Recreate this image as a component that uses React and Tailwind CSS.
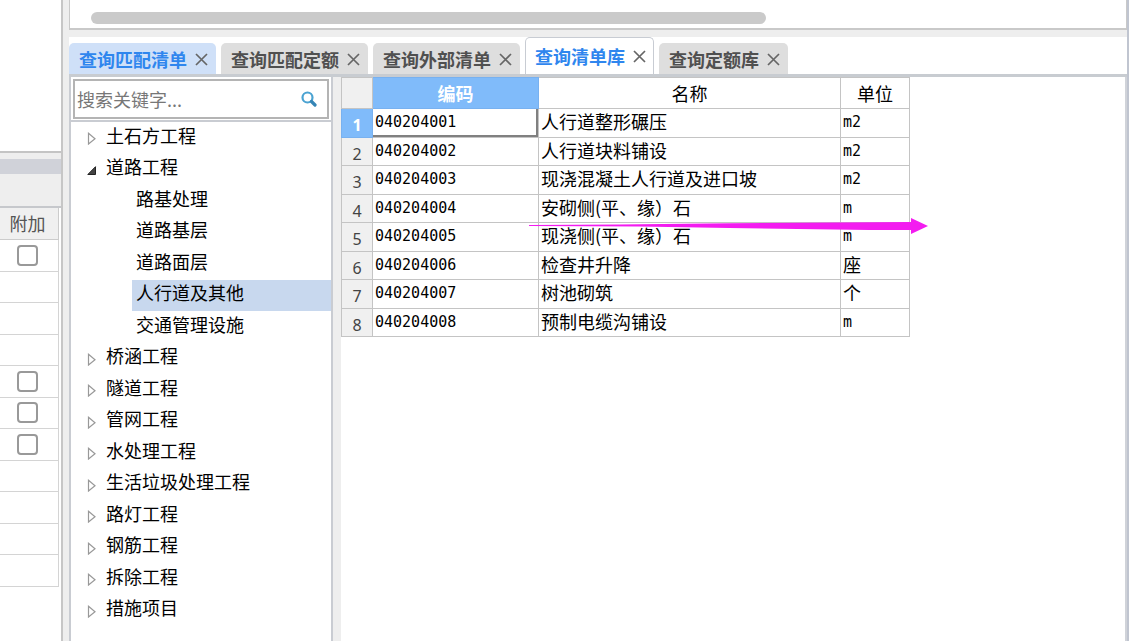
import React from "react";

const extraRows = [true, false, false, false, true, true, true, false, false, false, false];

const tabs = [
  { label: "查询匹配清单", kind: "hover" },
  { label: "查询匹配定额", kind: "idle" },
  { label: "查询外部清单", kind: "idle" },
  { label: "查询清单库", kind: "active" },
  { label: "查询定额库", kind: "idle" },
];

const tabStyles = {
  hover: "h-[31px] border-transparent bg-[#cfe0f8] text-[#2f86ee]",
  idle: "h-[31px] border-transparent bg-[#dedede] text-[#505050]",
  active: "h-[37px] border-[#c8ccd3] bg-white text-[#2f86ee]",
};

const tree = [
  { label: "土石方工程" },
  { label: "道路工程", open: true },
  { label: "路基处理", child: true },
  { label: "道路基层", child: true },
  { label: "道路面层", child: true },
  { label: "人行道及其他", child: true, selected: true },
  { label: "交通管理设施", child: true },
  { label: "桥涵工程" },
  { label: "隧道工程" },
  { label: "管网工程" },
  { label: "水处理工程" },
  { label: "生活垃圾处理工程" },
  { label: "路灯工程" },
  { label: "钢筋工程" },
  { label: "拆除工程" },
  { label: "措施项目" },
];

const items = [
  ["040204001", "人行道整形碾压", "m2"],
  ["040204002", "人行道块料铺设", "m2"],
  ["040204003", "现浇混凝土人行道及进口坡", "m2"],
  ["040204004", "安砌侧(平、缘）石", "m"],
  ["040204005", "现浇侧(平、缘）石", "m"],
  ["040204006", "检查井升降", "座"],
  ["040204007", "树池砌筑", "个"],
  ["040204008", "预制电缆沟铺设", "m"],
];

function CloseIcon() {
  return (
    <svg width="13" height="13" viewBox="0 0 13 13" fill="none" stroke="#666" strokeWidth="1.7" aria-hidden="true">
      <path d="M1 1L12 12M12 1L1 12" />
    </svg>
  );
}

function SearchIcon() {
  return (
    <svg width="16" height="16" viewBox="0 0 16 16" fill="none" aria-hidden="true">
      <circle cx="6.5" cy="6.5" r="5" stroke="#4ba3d2" strokeWidth="2.2" />
      <path d="M10.5 10.5L14 14" stroke="#3585b5" strokeWidth="3.2" strokeLinecap="round" />
    </svg>
  );
}

function Arrow({ open }) {
  return (
    <svg width="10" height="14" viewBox="0 0 10 14" className="shrink-0" aria-hidden="true">
      {open ? (
        <path d="M0.8 11.5L8.5 3.7V11.5Z" fill="#444" stroke="#222" strokeWidth="1" />
      ) : (
        <path d="M1.5 2.3L8 7.7L1.5 13Z" fill="white" stroke="#999" strokeWidth="1.2" />
      )}
    </svg>
  );
}

function SidePanel() {
  return (
    <aside className="flex w-[63px] shrink-0 flex-col border-r-2 border-[#c6c6c6] bg-white">
      <div className="h-[153px] shrink-0 border-b-2 border-[#c4c4c4]" />
      <div className="h-[6px] shrink-0 bg-[#eee]" />
      <div className="h-[15px] shrink-0 bg-[#d0d2d9]" />
      <div className="h-[34px] shrink-0 border-b-2 border-[#c6c8cc] bg-[#eee]" />
      <table className="mr-[2px] border-collapse">
        <thead>
          <tr className="h-[31px]">
            <th className="border-r border-b border-[#ccc] bg-[#f0f0f0] p-0 pr-[3px] text-[18px] leading-6 font-normal text-[#555]">附加</th>
          </tr>
        </thead>
        <tbody>
          {extraRows.map((box, i) => (
            <tr key={i} className="odd:h-8 even:h-[31px]">
              <td className="border-r border-b border-[#d4d4d4] p-0 pr-[3px]">
                {box && (
                  <input
                    type="checkbox"
                    aria-label={`附加 ${i + 1}`}
                    className="mx-auto block size-[21px] appearance-none rounded-[4px] border-2 border-[#999] bg-white"
                  />
                )}
              </td>
            </tr>
          ))}
        </tbody>
      </table>
    </aside>
  );
}

function Tabs() {
  return (
    <nav className="flex h-[40px] shrink-0 items-end gap-[5px] border-b-[3px] border-[#c8ccd1] bg-white">
      {tabs.map((t) => (
        <div
          key={t.label}
          className={`flex items-center gap-2 rounded-t-[5px] border border-b-0 pr-[7px] pl-[9px] text-[18px] leading-6 font-bold ${tabStyles[t.kind]}`}
        >
          <button type="button" className="pb-px">{t.label}</button>
          <button type="button" aria-label={`关闭 ${t.label}`}>
            <CloseIcon />
          </button>
        </div>
      ))}
    </nav>
  );
}

function TreePanel() {
  return (
    <section className="w-[264px] shrink-0 border-r-2 border-l-2 border-[#c9ccd2] bg-white">
      <div className="border-b-2 border-[#c9ccd2] p-[2px] pb-px">
        <label className="flex h-[40px] items-center border-2 border-[#b4b4b4] pr-[10px] pl-[2px]">
          <input
            type="text"
            aria-label="搜索关键字"
            placeholder="搜索关键字..."
            className="min-w-0 flex-1 text-[18px] leading-6 outline-none placeholder:text-[#777]"
          />
          <SearchIcon />
        </label>
      </div>
      <ul>
        {tree.map((n) => (
          <li key={n.label} className="flex items-center odd:h-8 even:h-[31px]">
            {n.child ? (
              <button
                type="button"
                className={`ml-[61px] h-full flex-1 pb-[7px] pl-1 text-left text-[18px] leading-6 text-black ${n.selected ? "bg-[#c8d8ee]" : ""}`}
              >
                {n.label}
              </button>
            ) : (
              <button
                type="button"
                className="ml-4 flex h-full flex-1 items-center gap-[9px] text-left text-[18px] leading-6 text-black"
              >
                <Arrow open={n.open} />
                <span className="pb-[7px]">{n.label}</span>
              </button>
            )}
          </li>
        ))}
      </ul>
    </section>
  );
}

function ItemTable() {
  return (
    <table className="w-[568px] table-fixed border-collapse text-black">
      <colgroup>
        <col className="w-[31px]" />
        <col className="w-[166px]" />
        <col className="w-[302px]" />
        <col className="w-[69px]" />
      </colgroup>
      <thead>
        <tr className="h-[31px] text-[18px] leading-6">
          <th className="border border-[#c4c4c4] bg-[#f0f0f0] p-0" />
          <th className="border border-[#78b1f0] bg-[#80bbfa] p-0 font-bold text-white">编码</th>
          <th className="border border-[#c4c4c4] p-0 font-normal">名称</th>
          <th className="border border-[#c4c4c4] p-0 font-normal">单位</th>
        </tr>
      </thead>
      <tbody>
        {items.map(([code, name, unit], i) => (
          <tr key={code} className="odd:h-[29px] even:h-[28px]">
            <th
              scope="row"
              className={`border p-0 pt-1 font-[Noto_Sans] text-[16px] leading-5 ${
                i === 0 ? "border-[#78b1f0] bg-[#80bbfa] font-bold text-white" : "border-[#c4c4c4] bg-[#f0f0f0] font-normal text-[#444]"
              }`}
            >
              {i + 1}
            </th>
            <td
              className={`border border-[#c4c4c4] p-0 pl-[2px] align-top font-[DejaVu_Sans_Mono] text-[15px] leading-[26px] ${
                i === 0 ? "shadow-[inset_-2px_-2px_0_#808080]" : ""
              }`}
            >
              {code}
            </td>
            <td className="border border-[#c4c4c4] p-0 pl-[2px] align-top text-[18px] leading-6 whitespace-nowrap">{name}</td>
            <td
              className={`border border-[#c4c4c4] p-0 pl-[2px] align-top ${
                unit.startsWith("m") ? "font-[DejaVu_Sans_Mono] text-[15px] leading-[26px]" : "text-[18px] leading-6"
              }`}
            >
              {unit}
            </td>
          </tr>
        ))}
      </tbody>
    </table>
  );
}

export default function App() {
  return (
    <div className="flex min-h-screen overflow-hidden bg-[#eee] font-['Noto_Sans_CJK_SC',sans-serif]">
      <SidePanel />
      <main className="ml-[6px] flex min-w-0 flex-1 flex-col border-r-2 border-[#c0c5d0]">
        <div className="h-[30px] shrink-0 border-r border-b-2 border-l border-[#c9c9c9] bg-white pt-3 pl-[21px]">
          <div className="h-3 w-[675px] rounded-full bg-[#cacaca]" />
        </div>
        <div className="mt-[7px] flex flex-1 flex-col">
          <Tabs />
          <div className="flex flex-1">
            <TreePanel />
            <section className="relative ml-2 min-w-0 flex-1 border-r-2 border-[#d0d3d9] bg-white">
              <ItemTable />
              <svg
                className="pointer-events-none absolute top-[141px] left-[188px]"
                width="400"
                height="16"
                viewBox="0 0 400 16"
                aria-hidden="true"
              >
                <path d="M0 7L90 6.6L200 5.3L382 4V0L399 8L382 16V12L340 12L200 10L110 8.6L0 8Z" fill="#f31cf0" />
              </svg>
            </section>
          </div>
        </div>
      </main>
    </div>
  );
}
